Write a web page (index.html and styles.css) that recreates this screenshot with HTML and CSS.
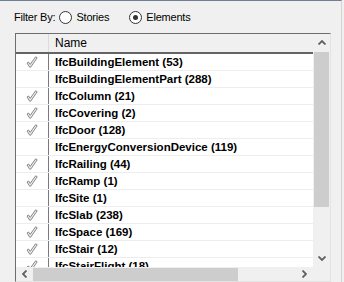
FILE: index.html
```html
<!DOCTYPE html>
<html>
<head>
<meta charset="utf-8">
<title>Filter</title>
<link rel="stylesheet" href="styles.css">
</head>
<body>
<div class="panel">
	<div class="filter">
		<span class="flabel">Filter By:</span>
		<label class="radio"><span class="dot"></span>Stories</label>
		<label class="radio on"><span class="dot"></span>Elements</label>
	</div>
	<div class="list">
		<div class="top">
			<div class="view">
				<div class="head"><div class="hcheck"></div><div class="hname">Name</div></div>
				<div class="row"><div class="chk"><svg width="12" height="12" viewBox="0 0 12 12"><path d="M1 7 L2.6 6 L4.2 8.4 L9.6 0.8 L11.2 1.8 L4.7 11.2 L3.7 11.2 Z" fill="#ececec" stroke="#7c7c7c" stroke-width="0.9"/></svg></div><div class="nm">IfcBuildingElement (53)</div></div>
				<div class="row"><div class="chk"></div><div class="nm">IfcBuildingElementPart (288)</div></div>
				<div class="row"><div class="chk"><svg width="12" height="12" viewBox="0 0 12 12"><path d="M1 7 L2.6 6 L4.2 8.4 L9.6 0.8 L11.2 1.8 L4.7 11.2 L3.7 11.2 Z" fill="#ececec" stroke="#7c7c7c" stroke-width="0.9"/></svg></div><div class="nm">IfcColumn (21)</div></div>
				<div class="row"><div class="chk"><svg width="12" height="12" viewBox="0 0 12 12"><path d="M1 7 L2.6 6 L4.2 8.4 L9.6 0.8 L11.2 1.8 L4.7 11.2 L3.7 11.2 Z" fill="#ececec" stroke="#7c7c7c" stroke-width="0.9"/></svg></div><div class="nm">IfcCovering (2)</div></div>
				<div class="row"><div class="chk"><svg width="12" height="12" viewBox="0 0 12 12"><path d="M1 7 L2.6 6 L4.2 8.4 L9.6 0.8 L11.2 1.8 L4.7 11.2 L3.7 11.2 Z" fill="#ececec" stroke="#7c7c7c" stroke-width="0.9"/></svg></div><div class="nm">IfcDoor (128)</div></div>
				<div class="row"><div class="chk"></div><div class="nm">IfcEnergyConversionDevice (119)</div></div>
				<div class="row"><div class="chk"><svg width="12" height="12" viewBox="0 0 12 12"><path d="M1 7 L2.6 6 L4.2 8.4 L9.6 0.8 L11.2 1.8 L4.7 11.2 L3.7 11.2 Z" fill="#ececec" stroke="#7c7c7c" stroke-width="0.9"/></svg></div><div class="nm">IfcRailing (44)</div></div>
				<div class="row"><div class="chk"><svg width="12" height="12" viewBox="0 0 12 12"><path d="M1 7 L2.6 6 L4.2 8.4 L9.6 0.8 L11.2 1.8 L4.7 11.2 L3.7 11.2 Z" fill="#ececec" stroke="#7c7c7c" stroke-width="0.9"/></svg></div><div class="nm">IfcRamp (1)</div></div>
				<div class="row"><div class="chk"></div><div class="nm">IfcSite (1)</div></div>
				<div class="row"><div class="chk"><svg width="12" height="12" viewBox="0 0 12 12"><path d="M1 7 L2.6 6 L4.2 8.4 L9.6 0.8 L11.2 1.8 L4.7 11.2 L3.7 11.2 Z" fill="#ececec" stroke="#7c7c7c" stroke-width="0.9"/></svg></div><div class="nm">IfcSlab (238)</div></div>
				<div class="row"><div class="chk"><svg width="12" height="12" viewBox="0 0 12 12"><path d="M1 7 L2.6 6 L4.2 8.4 L9.6 0.8 L11.2 1.8 L4.7 11.2 L3.7 11.2 Z" fill="#ececec" stroke="#7c7c7c" stroke-width="0.9"/></svg></div><div class="nm">IfcSpace (169)</div></div>
				<div class="row"><div class="chk"><svg width="12" height="12" viewBox="0 0 12 12"><path d="M1 7 L2.6 6 L4.2 8.4 L9.6 0.8 L11.2 1.8 L4.7 11.2 L3.7 11.2 Z" fill="#ececec" stroke="#7c7c7c" stroke-width="0.9"/></svg></div><div class="nm">IfcStair (12)</div></div>
				<div class="row"><div class="chk"><svg width="12" height="12" viewBox="0 0 12 12"><path d="M1 7 L2.6 6 L4.2 8.4 L9.6 0.8 L11.2 1.8 L4.7 11.2 L3.7 11.2 Z" fill="#ececec" stroke="#7c7c7c" stroke-width="0.9"/></svg></div><div class="nm">IfcStairFlight (18)</div></div>
			</div>
			<div class="vscroll">
				<div class="btn"><svg width="8" height="5" viewBox="0 0 8 5"><path d="M0.5 4.5 L4 1 L7.5 4.5" fill="none" stroke="#606060" stroke-width="1.8"/></svg></div>
				<div class="vthumb"></div>
				<div class="vtrack"></div>
				<div class="btn"><svg width="8" height="5" viewBox="0 0 8 5"><path d="M0.5 0.5 L4 4 L7.5 0.5" fill="none" stroke="#606060" stroke-width="1.8"/></svg></div>
			</div>
		</div>
		<div class="hscroll">
			<div class="btn"><svg width="5" height="8" viewBox="0 0 5 8"><path d="M4.5 0.5 L1 4 L4.5 7.5" fill="none" stroke="#606060" stroke-width="1.8"/></svg></div>
			<div class="hthumb"></div>
			<div class="htrack"></div>
			<div class="btn"><svg width="5" height="8" viewBox="0 0 5 8"><path d="M0.5 0.5 L4 4 L0.5 7.5" fill="none" stroke="#606060" stroke-width="1.8"/></svg></div>
			<div class="corner"></div>
		</div>
	</div>
</div>
</body>
</html>
```
FILE: styles.css
```css
body
{
	margin:0;
	background:#f0f0f0;
	font-family:"Liberation Sans", Arial, sans-serif;
	font-size:11px;
	color:#000;
	overflow:hidden;
}
.panel
{
	width:341px;
	height:281px;
	border-top:1px solid #6d7f94;
	border-right:1px solid #d4d4d4;
}
.filter
{
	display:flex;
	align-items:center;
	height:32px;
	padding-left:14px;
	letter-spacing:-0.2px;
}
.flabel
{
	margin-right:4px;
}
.radio
{
	display:flex;
	align-items:center;
	margin-right:20px;
}
.dot
{
	width:11px;
	height:11px;
	border:1px solid #333;
	border-radius:50%;
	background:#fff;
	margin-right:4px;
	position:relative;
}
.radio.on .dot::after
{
	content:"";
	position:absolute;
	left:3px;
	top:3px;
	width:5px;
	height:5px;
	border-radius:50%;
	background:#333;
}
.list
{
	margin-left:15px;
	width:314px;
	height:247px;
	border-top:1px solid #6e6e6e;
	border-left:1px solid #6e6e6e;
	border-right:1px solid #e3e3e3;
	border-bottom:1px solid #e3e3e3;
	display:flex;
	flex-direction:column;
}
.top
{
	display:flex;
	height:233px;
	flex:none;
}
.view
{
	flex:1;
	background:#fff;
	overflow:hidden;
}
.head
{
	display:flex;
	height:18px;
	background:#f0f0f0;
	border-bottom:2px solid #646464;
	font-size:12px;
}
.hcheck
{
	width:32px;
	border-right:1px solid #dcdcdc;
}
.hname
{
	padding-left:6px;
	line-height:18px;
}
.row
{
	display:flex;
	height:16px;
	border-bottom:1px solid #ededed;
}
.chk
{
	width:32px;
	display:flex;
	align-items:center;
	justify-content:center;
	border-right:1px solid #7a7a7a;
}
.nm
{
	padding-left:6px;
	font-weight:bold;
	font-size:11.5px;
	line-height:16px;
	white-space:nowrap;
}
.vscroll
{
	width:17px;
	display:flex;
	flex-direction:column;
	background:#f0f0f0;
}
.btn
{
	width:17px;
	height:17px;
	display:flex;
	align-items:center;
	justify-content:center;
	flex:none;
}
.hscroll .btn
{
	height:14px;
}
.vthumb
{
	margin:1px 1px 0 1px;
	height:155px;
	background:#cdcdcd;
}
.vtrack
{
	flex:1;
}
.hscroll
{
	display:flex;
	height:14px;
	flex:none;
	background:#f0f0f0;
}
.hthumb
{
	margin:1px 0 0 0;
	width:205px;
	background:#cdcdcd;
}
.htrack
{
	flex:1;
}
.corner
{
	width:17px;
}
```
